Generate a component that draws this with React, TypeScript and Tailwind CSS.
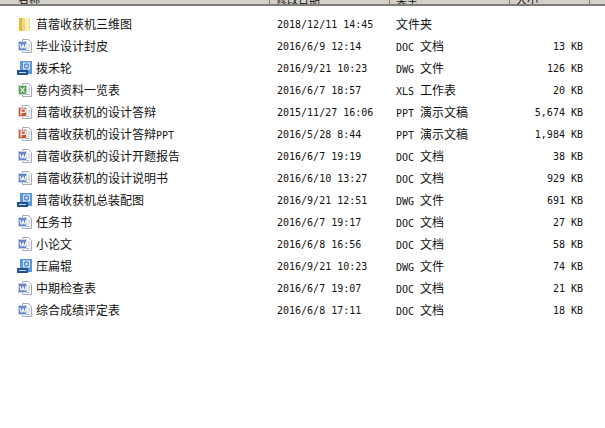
import React from "react";

type Kind = "folder" | "doc" | "dwg" | "xls" | "ppt";

const rows: { name: string; date: string; type: string; size: string; kind: Kind }[] = [
  { name: "苜蓿收获机三维图", date: "2018/12/11 14:45", type: "文件夹", size: "", kind: "folder" },
  { name: "毕业设计封皮", date: "2016/6/9 12:14", type: "DOC 文档", size: "13 KB", kind: "doc" },
  { name: "拨禾轮", date: "2016/9/21 10:23", type: "DWG 文件", size: "126 KB", kind: "dwg" },
  { name: "卷内资料一览表", date: "2016/6/7 18:57", type: "XLS 工作表", size: "20 KB", kind: "xls" },
  { name: "苜蓿收获机的设计答辩", date: "2015/11/27 16:06", type: "PPT 演示文稿", size: "5,674 KB", kind: "ppt" },
  { name: "苜蓿收获机的设计答辩PPT", date: "2016/5/28 8:44", type: "PPT 演示文稿", size: "1,984 KB", kind: "ppt" },
  { name: "苜蓿收获机的设计开题报告", date: "2016/6/7 19:19", type: "DOC 文档", size: "38 KB", kind: "doc" },
  { name: "苜蓿收获机的设计说明书", date: "2016/6/10 13:27", type: "DOC 文档", size: "929 KB", kind: "doc" },
  { name: "苜蓿收获机总装配图", date: "2016/9/21 12:51", type: "DWG 文件", size: "691 KB", kind: "dwg" },
  { name: "任务书", date: "2016/6/7 19:17", type: "DOC 文档", size: "27 KB", kind: "doc" },
  { name: "小论文", date: "2016/6/8 16:56", type: "DOC 文档", size: "58 KB", kind: "doc" },
  { name: "压扁辊", date: "2016/9/21 10:23", type: "DWG 文件", size: "74 KB", kind: "dwg" },
  { name: "中期检查表", date: "2016/6/7 19:07", type: "DOC 文档", size: "21 KB", kind: "doc" },
  { name: "综合成绩评定表", date: "2016/6/8 17:11", type: "DOC 文档", size: "18 KB", kind: "doc" },
];

// latin runs are 6px wide per char, CJK 12px
const Mixed = ({ text }: { text: string }) => (
  <>
    {text.split(/([\x20-\x7e]+)/).map((part, i) =>
      /^[\x20-\x7e]+$/.test(part) ? (
        <span key={i} className="text-[10px] font-['DejaVu_Sans_Mono',monospace] whitespace-pre">
          {part}
        </span>
      ) : (
        <span key={i}>{part}</span>
      )
    )}
  </>
);

const FileIcon = ({ kind }: { kind: Kind }) => {
  if (kind === "folder") {
    return (
      <svg width="16" height="16" viewBox="0 0 16 16">
        <path d="M2 2h4l1 1v12H3l-1-1z" fill="#dfb944" />
        <path d="M5 2h7l1 1v11l-1 1H5z" fill="#f2d778" />
        <path d="M8 2h3l1 1v11l-1 1H8z" fill="#fbeeb8" />
      </svg>
    );
  }
  if (kind === "dwg") {
    return (
      <svg width="16" height="16" viewBox="0 0 16 16">
        <path d="M3 1h12v13H3z" fill="#5a96dc" />
        <path d="M6 2.500h7v7H6z" fill="#dbe8f7" />
        <circle cx="9.500" cy="6" r="2" fill="none" stroke="#4f8bd6" strokeWidth="1.300" />
        <path d="M0 10h11v5H0z" fill="#23508f" />
        <path d="M2 12h7v1H2z" fill="#cfdcf0" />
      </svg>
    );
  }
  const color = kind === "doc" ? "#5f83c6" : kind === "xls" ? "#55a548" : "#d2552a";
  const letter =
    kind === "doc"
      ? "M3 6l1 4h1l1-3 1 3h1l1-4"
      : kind === "xls"
        ? "M3.500 5.500l4 5M7.500 5.500l-4 5"
        : "M4 11V5h3a1.500 1.500 0 010 3.400H4";
  return (
    <svg width="16" height="16" viewBox="0 0 16 16">
      <path d="M5.500 1.500h6l3 3v10h-9z" fill="#fff" stroke="#a0aaba" />
      <path d="M11 6h2M11 8h2M11 10h2M8 12.500h5" stroke="#b3bccb" />
      <path d="M1.500 3.500h8v9h-8z" fill={color} stroke="#c9d3e4" />
      <path d={letter} fill="none" stroke="#fff" strokeWidth="1.100" />
    </svg>
  );
};

export default function App() {
  return (
    <div className="w-[605px] h-[428px] bg-white overflow-hidden font-['Noto_Sans_CJK_SC',sans-serif] text-[12px] text-[#111]">
      <div className="h-[6px] bg-[#d4d0c8] border-b-2 border-[#7f7d78] flex overflow-hidden text-[11px]">
        <div className="w-[270px] border-r border-[#808080] pl-[18px] -mt-[9px]">名称</div>
        <div className="w-[120px] border-r border-[#808080] pl-[6px] -mt-[9px]">修改日期</div>
        <div className="w-[120px] border-r border-[#808080] pl-[6px] -mt-[9px]">类型</div>
        <div className="w-[80px] border-r border-[#808080] pl-[6px] -mt-[9px]">大小</div>
      </div>
      <div className="pt-[7px]">
        {rows.map((row) => (
          <div key={row.name} className="h-[22px] flex items-center">
            <div className="w-[36px] pl-[17px] shrink-0 flex">
              <FileIcon kind={row.kind} />
            </div>
            <div className="w-[241px] shrink-0">
              <Mixed text={row.name} />
            </div>
            <div className="w-[119px] shrink-0 text-[10px] font-['DejaVu_Sans_Mono',monospace]">{row.date}</div>
            <div className="w-[116px] shrink-0">
              <Mixed text={row.type} />
            </div>
            <div className="w-[71px] shrink-0 text-right text-[10px] font-['DejaVu_Sans_Mono',monospace]">{row.size}</div>
          </div>
        ))}
      </div>
    </div>
  );
}
